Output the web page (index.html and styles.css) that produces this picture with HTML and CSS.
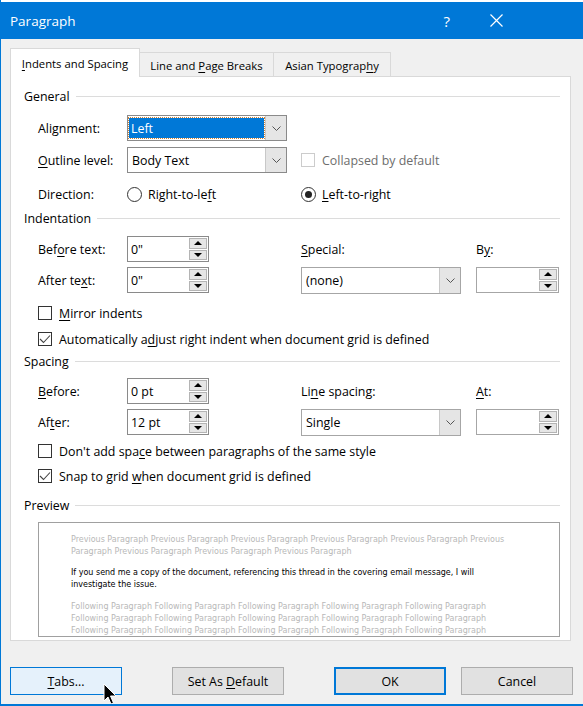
FILE: index.html
```html
<!DOCTYPE html>
<html>
<head>
<meta charset="utf-8">
<link rel="stylesheet" href="styles.css">
</head>
<body>
<div class="window">
  <div class="topstrip"></div>
  <div class="titlebar">
    <span class="title">Paragraph</span>
    <span class="help">?</span>
    <svg class="close" width="13" height="13" viewBox="0 0 13 13"><path d="M0.5 0.5 L12.5 12.5 M12.5 0.5 L0.5 12.5" stroke="#fff" stroke-width="1.2" fill="none"/></svg>
  </div>

  <div class="tabs">
    <div class="tab active"><span><u>I</u>ndents and Spacing</span></div>
    <div class="tab t2"><span>Line and <u>P</u>age Breaks</span></div>
    <div class="tab t3"><span>Asian Typograp<u>h</u>y</span></div>
  </div>

  <div class="panel">
    <div class="head"><span>General</span><i class="rule"></i></div>

    <div class="row h26 m11">
      <span class="c1">Ali<u>g</u>nment:</span>
      <div class="combo c2 focused">
        <span class="val"><span class="hl">Left</span></span>
        <span class="drop"><svg width="9" height="5" viewBox="0 0 9 5"><path d="M0.5 0.5 L4.5 4.5 L8.5 0.5" stroke="#555" fill="none"/></svg></span>
      </div>
    </div>

    <div class="row h26 m6">
      <span class="c1"><u>O</u>utline level:</span>
      <div class="combo c2">
        <span class="val">Body Text</span>
        <span class="drop"><svg width="9" height="5" viewBox="0 0 9 5"><path d="M0.5 0.5 L4.5 4.5 L8.5 0.5" stroke="#555" fill="none"/></svg></span>
      </div>
      <span class="c3 check disabled"><i class="box"></i><span>Collapsed by default</span></span>
    </div>

    <div class="row h20 m11">
      <span class="c1">Direction:</span>
      <span class="c2 radio"><i class="circle"></i><span>Right-to-le<u>f</u>t</span></span>
      <span class="c3 radio on"><i class="circle"></i><span><u>L</u>eft-to-right</span></span>
    </div>

    <div class="head m6"><span>Indentation</span><i class="rule"></i></div>

    <div class="row h26 m10">
      <span class="c1">Bef<u>o</u>re text:</span>
      <div class="c2"><div class="spin"><span class="val">0"</span><span class="arrows"><i class="up"></i><i class="dn"></i></span></div></div>
      <span class="c3"><u>S</u>pecial:</span>
      <span class="c4">B<u>y</u>:</span>
    </div>

    <div class="row h26 m5">
      <span class="c1">After te<u>x</u>t:</span>
      <div class="c2"><div class="spin"><span class="val">0"</span><span class="arrows"><i class="up"></i><i class="dn"></i></span></div></div>
      <div class="combo c3 light tall">
        <span class="val">(none)</span>
        <span class="drop"><svg width="9" height="5" viewBox="0 0 9 5"><path d="M0.5 0.5 L4.5 4.5 L8.5 0.5" stroke="#555" fill="none"/></svg></span>
      </div>
      <div class="c4"><div class="spin w83 light"><span class="val"></span><span class="arrows"><i class="up"></i><i class="dn"></i></span></div></div>
    </div>

    <div class="row h18 m11">
      <span class="check"><i class="box"></i><span><u>M</u>irror indents</span></span>
    </div>
    <div class="row h18 m8">
      <span class="check on"><i class="box"><svg width="12" height="10" viewBox="0 0 12 10"><path d="M1 5 L4.5 8.5 L11 1.5" stroke="#444" stroke-width="1.1" fill="none"/></svg></i><span>Automatically a<u>d</u>just right indent when document grid is defined</span></span>
    </div>

    <div class="head m5"><span>Spacing</span><i class="rule"></i></div>

    <div class="row h26 m9">
      <span class="c1"><u>B</u>efore:</span>
      <div class="c2"><div class="spin"><span class="val">0 pt</span><span class="arrows"><i class="up"></i><i class="dn"></i></span></div></div>
      <span class="c3">Li<u>n</u>e spacing:</span>
      <span class="c4"><u>A</u>t:</span>
    </div>

    <div class="row h26 m5">
      <span class="c1">Af<u>t</u>er:</span>
      <div class="c2"><div class="spin"><span class="val">12 pt</span><span class="arrows"><i class="up"></i><i class="dn"></i></span></div></div>
      <div class="combo c3 light tall">
        <span class="val">Single</span>
        <span class="drop"><svg width="9" height="5" viewBox="0 0 9 5"><path d="M0.5 0.5 L4.5 4.5 L8.5 0.5" stroke="#555" fill="none"/></svg></span>
      </div>
      <div class="c4"><div class="spin w83 light"><span class="val"></span><span class="arrows"><i class="up"></i><i class="dn"></i></span></div></div>
    </div>

    <div class="row h18 m7">
      <span class="check"><i class="box"></i><span>Don't add spa<u>c</u>e between paragraphs of the same style</span></span>
    </div>
    <div class="row h18 m7">
      <span class="check on"><i class="box"><svg width="12" height="10" viewBox="0 0 12 10"><path d="M1 5 L4.5 8.5 L11 1.5" stroke="#444" stroke-width="1.1" fill="none"/></svg></i><span>Snap to grid <u>w</u>hen document grid is defined</span></span>
    </div>

    <div class="head m12"><span>Preview</span><i class="rule"></i></div>

    <div class="preview">
      <p class="grey">Previous Paragraph Previous Paragraph Previous Paragraph Previous Paragraph Previous Paragraph Previous Paragraph Previous Paragraph Previous Paragraph Previous Paragraph</p>
      <p class="black">If you send me a copy of the document, referencing this thread in the covering email message, I will investigate the issue.</p>
      <p class="grey">Following Paragraph Following Paragraph Following Paragraph Following Paragraph Following Paragraph Following Paragraph Following Paragraph Following Paragraph Following Paragraph Following Paragraph Following Paragraph Following Paragraph Following Paragraph Following Paragraph Following Paragraph</p>
    </div>
  </div>

  <div class="footer">
    <div class="btn hover"><span><u>T</u>abs...</span></div>
    <div class="btn b2"><span>Set As <u>D</u>efault</span></div>
    <div class="btn b3 default"><span>OK</span></div>
    <div class="btn b4"><span>Cancel</span></div>
  </div>

  <svg class="cursor" width="14" height="22" viewBox="0 0 14 22"><path d="M1 1 L1 18 L5 14 L8 21 L10.5 20 L7.5 13 L13 13 Z" fill="#000" stroke="#fff" stroke-width="1"/></svg>
</div>
</body>
</html>
```

FILE: styles.css
```css
* { box-sizing: border-box; }
html, body { margin: 0; padding: 0; }
body {
  font-family: "Open Sans", "Noto Sans", sans-serif;
  font-size: 12.4px;
  color: #000;
  background: #f0f0f0;
}
u { text-decoration: underline; text-underline-offset: 2px; text-decoration-thickness: 1px; }

.window {
  position: relative;
  width: 583px;
  height: 706px;
  background: #f0f0f0;
  border-left: 1px solid #0078d7;
  border-bottom: 2px solid #0078d7;
  overflow: hidden;
}
.topstrip { height: 2px; background: #ffffff; }
.titlebar {
  height: 37px;
  background: #0078d7;
  color: #fff;
  display: flex;
  align-items: center;
  padding-left: 9px;
}
.title { font-size: 13.5px; flex: 1; }
.help { font-size: 15px; margin-right: 40px; }
.close { margin-right: 80px; }

.tabs {
  display: flex;
  align-items: flex-end;
  margin-top: 9px;
  margin-left: 9px;
  height: 28px;
  position: relative;
  z-index: 2;
  font-size: 11.3px;
}
.tab {
  height: 24px;
  border: 1px solid #d9d9d9;
  border-bottom: none;
  background: #f0f0f0;
  display: flex;
  align-items: center;
  justify-content: center;
  padding-top: 1px;
  white-space: nowrap;
}
.tab.active {
  height: 29px;
  width: 130px;
  background: #fff;
  margin-bottom: -1px;
  padding-top: 0;
}
.tab.t2 { width: 134px; border-left: none; }
.tab.t3 { width: 117px; border-left: none; }

.panel {
  margin-left: 9px;
  width: 561px;
  height: 565px;
  background: #fff;
  border: 1px solid #d9d9d9;
  padding: 11px 0 0 13px;
  position: relative;
  z-index: 1;
}

.head {
  display: flex;
  align-items: center;
  height: 16px;
  width: 536px;
}
.head .rule { flex: 1; height: 1px; background: #dcdcdc; margin-left: 6px; }

.row { display: flex; align-items: center; padding-left: 14px; white-space: nowrap; }
.h26 { height: 26px; }
.h20 { height: 20px; }
.h18 { height: 18px; }
.m4 { margin-top: 4px; }
.m5 { margin-top: 5px; }
.m6 { margin-top: 6px; }
.m7 { margin-top: 7px; }
.m8 { margin-top: 8px; }
.m9 { margin-top: 9px; }
.m10 { margin-top: 10px; }
.m11 { margin-top: 11px; }
.m12 { margin-top: 12px; }

.c1 { width: 89px; flex: none; }
.c2 { width: 160px; flex: none; }
.c3 { width: 160px; margin-left: 14px; flex: none; }
.c4 { width: 83px; margin-left: 15px; flex: none; }

.combo {
  height: 26px;
  border: 1px solid #8a8a8a;
  background: #fff;
  display: flex;
  align-items: stretch;
}
.combo.tall { height: 27px; }
.combo.light { border-color: #a6a6a6; }
.combo .val { flex: 1; display: flex; align-items: center; padding-left: 4px; }
.combo .drop {
  width: 21px;
  background: #e5e5e5;
  border-left: 1px solid #c8c8c8;
  display: flex;
  align-items: center;
  justify-content: center;
}
.combo.focused .val { padding: 2px 1px 2px 1px; }
.combo.focused .hl {
  flex: 1;
  height: 100%;
  background: #0078d7;
  color: #fff;
  outline: 1px dotted #d08030;
  display: flex;
  align-items: center;
  padding-left: 2px;
}

.spin {
  width: 82px;
  height: 26px;
  border: 1px solid #8a8a8a;
  background: #fff;
  display: flex;
}
.spin.w83 { width: 83px; }
.spin.light { border-color: #a6a6a6; }
.spin .val { flex: 1; display: flex; align-items: center; padding-left: 3px; }
.spin .arrows {
  width: 19px;
  display: flex;
  flex-direction: column;
  padding: 1px 1px 1px 0;
  gap: 1px;
}
.spin .arrows i {
  flex: 1;
  background: #e6e6e6;
  border: 1px solid #b4b4b4;
  position: relative;
}
.spin .arrows i::after {
  content: "";
  position: absolute;
  left: 50%;
  top: 50%;
  width: 0; height: 0;
  border-left: 4px solid transparent;
  border-right: 4px solid transparent;
  transform: translate(-50%, -50%);
}
.spin .arrows i.up::after { border-bottom: 4px solid #000; }
.spin .arrows i.dn::after { border-top: 4px solid #000; }

.check, .radio { display: flex; align-items: center; }
.check .box {
  width: 14px;
  height: 14px;
  border: 1px solid #333;
  background: #fff;
  margin-right: 7px;
  display: flex;
  align-items: center;
  justify-content: center;
  flex: none;
}
.check.disabled .box { border-color: #cccccc; }
.check.disabled span { color: #6d6d6d; }
.radio .circle {
  width: 15px;
  height: 15px;
  border: 1px solid #333;
  border-radius: 50%;
  background: #fff;
  margin-right: 6px;
  position: relative;
  flex: none;
}
.radio.on .circle::after {
  content: "";
  position: absolute;
  left: 3px; top: 3px;
  width: 7px; height: 7px;
  border-radius: 50%;
  background: #222;
}

.preview {
  margin-top: 9px;
  margin-left: 14px;
  width: 522px;
  height: 115px;
  border: 1px solid #a0a0a0;
  background: #fff;
  padding: 11px 48px 0 32px;
  overflow: hidden;
  font-family: "DejaVu Sans", sans-serif;
  font-size: 8px;
  line-height: 12px;
}
.preview p { margin: 0; }
.preview .grey { color: #b8b8b8; }
.preview .black { color: #000; margin: 9px 0 10px 0; }

.footer {
  display: flex;
  margin-top: 26px;
  padding-left: 9px;
}
.btn {
  width: 112px;
  height: 28px;
  border: 1px solid #adadad;
  background: #e1e1e1;
  display: flex;
  align-items: center;
  justify-content: center;
  white-space: nowrap;
}
.btn.hover { background: #e5f1fb; border-color: #0078d7; }
.btn.b2 { margin-left: 50px; }
.btn.b3 { margin-left: 50px; border: 2px solid #0078d7; }
.btn.b4 { margin-left: 15px; }

.cursor { position: absolute; left: 102px; top: 683px; }
```
